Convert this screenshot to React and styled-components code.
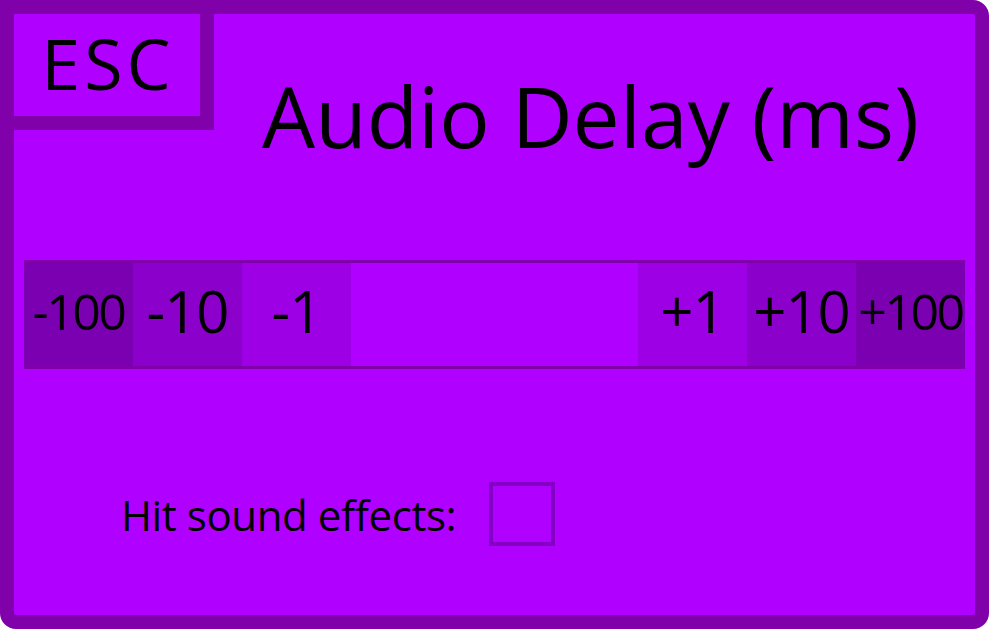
import React, { useState } from "react";
import styled, { createGlobalStyle } from "styled-components";

const GlobalStyle = createGlobalStyle`
  html, body {
    margin: 0;
    padding: 0;
    background: #ffffff;
  }
  * {
    box-sizing: border-box;
  }
`;

const Panel = styled.div`
  width: 989px;
  height: 629px;
  background: #b000ff;
  border: 14px solid #8000aa;
  border-radius: 0 16px 16px 16px;
  font-family: "Open Sans", sans-serif;
  color: #000;
  display: flex;
  flex-direction: column;
  overflow: hidden;
`;

const Header = styled.div`
  display: flex;
  align-items: flex-start;
  height: 246px;
`;

const EscButton = styled.div`
  width: 200px;
  height: 116px;
  border-right: 14px solid #8000aa;
  border-bottom: 14px solid #8000aa;
  display: flex;
  align-items: center;
  justify-content: center;
  font-size: 70px;
  letter-spacing: 4px;
  line-height: 1;
  padding-bottom: 4px;
  padding-left: 2px;
  cursor: pointer;
`;

const Title = styled.h1`
  flex: 1;
  margin: 0;
  margin-top: 60px;
  padding-right: 8px;
  text-align: center;
  font-weight: 400;
  font-size: 84px;
  line-height: 1;
`;

const Stepper = styled.div`
  margin: 0 10px;
  height: 109px;
  border-top: 3px solid #8000aa;
  border-bottom: 3px solid #8000aa;
  display: flex;
`;

const StepButton = styled.div`
  width: 109px;
  flex: none;
  display: flex;
  align-items: center;
  justify-content: center;
  padding-bottom: 8px;
  background: rgba(0, 0, 0, ${(p) => p.$shade});
  font-size: ${(p) => (p.$small ? 50 : 58)}px;
  letter-spacing: ${(p) => (p.$small ? -2.5 : -1)}px;
  line-height: 1;
  cursor: pointer;
`;

const Value = styled.div`
  flex: 1;
`;

const OptionRow = styled.label`
  display: flex;
  align-items: center;
  margin-top: 113px;
  padding-left: 107px;
  gap: 33px;
  font-size: 42px;
  letter-spacing: -0.4px;
`;

const Checkbox = styled.span`
  width: 66px;
  height: 64px;
  border: 4px solid #8400c4;
  background: ${(p) => (p.$checked ? "#8400c4" : "transparent")};
  cursor: pointer;
`;

const steps = [
  { label: "-100", shade: 0.3, small: true },
  { label: "-10", shade: 0.2 },
  { label: "-1", shade: 0.1 },
  null,
  { label: "+1", shade: 0.1 },
  { label: "+10", shade: 0.2 },
  { label: "+100", shade: 0.3, small: true },
];

const App = () => {
  const [hit, setHit] = useState(false);

  return (
    <>
      <GlobalStyle />
      <Panel>
        <Header>
          <EscButton>ESC</EscButton>
          <Title>Audio Delay (ms)</Title>
        </Header>
        <Stepper>
          {steps.map((s, i) =>
            s ? (
              <StepButton key={i} $shade={s.shade} $small={s.small}>
                {s.label}
              </StepButton>
            ) : (
              <Value key={i} />
            )
          )}
        </Stepper>
        <OptionRow onClick={() => setHit(!hit)}>
          Hit sound effects:
          <Checkbox $checked={hit} />
        </OptionRow>
      </Panel>
    </>
  );
};

export default App;
